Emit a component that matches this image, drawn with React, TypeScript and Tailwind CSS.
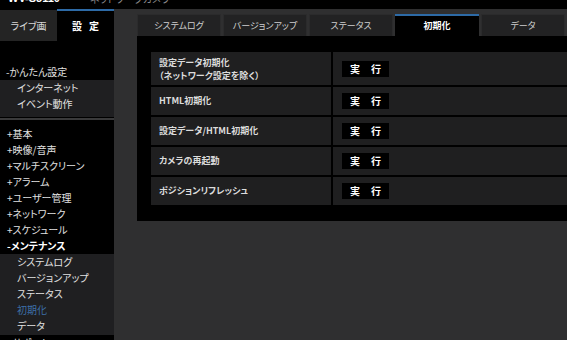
const font = "[font-family:'Noto_Sans_CJK_JP',sans-serif] [font-feature-settings:'palt']";

const basic = ['+基本', '+映像/音声', '+マルチスクリーン', '+アラーム', '+ユーザー管理', '+ネットワーク', '+スケジュール'];
const maint = ['システムログ', 'バージョンアップ', 'ステータス', '初期化', 'データ'];
const tabs = ['システムログ', 'バージョンアップ', 'ステータス', '初期化', 'データ'];

const rows = ['HTML初期化', '設定データ/HTML初期化', 'カメラの再起動', 'ポジションリフレッシュ'];

function RunButton() {
  return (
    <div className="flex h-[16px] w-[47px] items-center justify-center gap-[11px] bg-black text-[10px] font-bold leading-none text-white">
      <span>実</span>
      <span>行</span>
    </div>
  );
}

function Sidebar() {
  return (
    <div className="w-[114px] shrink-0 overflow-hidden bg-black text-[10px] leading-[16px] text-[#e2e2e2]">
      {/* Live / Setup tabs */}
      <div className="flex h-[32px]">
        <div className="flex w-[57px] items-center justify-center border-t border-black bg-[#242424] text-[#d8d8d8]">
          ライブ画
        </div>
        <div className="flex w-[57px] items-center justify-center gap-[7px] border-t-2 border-[#2d6aa6] bg-black font-bold text-white">
          <span>設</span>
          <span>定</span>
        </div>
      </div>

      <div className="h-[23px]" />
      <div className="h-[16px] pl-[6px]">-かんたん設定</div>
      <div className="bg-[#1f1f21] pb-[5px]">
        <div className="h-[16px] pl-[17px]">インターネット</div>
        <div className="h-[16px] pl-[17px]">イベント動作</div>
      </div>
      <div className="h-[1px] bg-black" />
      <div className="h-[2px] bg-[#3a3a3b]" />

      <div className="pt-[6px]">
        {basic.map((item) => (
          <div key={item} className="h-[16px] pl-[7px]">
            {item}
          </div>
        ))}
        <div className="h-[16px] pl-[7px] font-bold text-white">-メンテナンス</div>
      </div>
      <div className="bg-[#1f1f21] pb-[1px]">
        {maint.map((item) => (
          <div
            key={item}
            className={item === '初期化' ? 'h-[16px] pl-[17px] text-[#3d6fa8]' : 'h-[16px] pl-[17px]'}
          >
            {item}
          </div>
        ))}
      </div>
      <div className="h-[16px] pl-[7px]">+サポート</div>
    </div>
  );
}

export default function App() {
  return (
    <div className={`flex h-[340px] w-[567px] flex-col overflow-hidden bg-[#2f2f30] ${font}`}>
      {/* Header, cut at top */}
      <div className="flex h-[9px] shrink-0 items-end gap-[30px] overflow-hidden bg-black pl-[8px] leading-none">
        <span className="mb-[5px] text-[11px] font-bold text-white [font-family:'Liberation_Sans',sans-serif]">WV-S3110</span>
        <span className="mb-[5px] text-[10px] text-[#8a8a8a]">ネットワークカメラ</span>
      </div>

      <div className="flex min-h-0 flex-1">
        <Sidebar />

        <div className="min-w-0 flex-1 overflow-hidden pl-[23px] pt-[5px]">
          {/* Tabs */}
          <div className="flex gap-[2px]">
            {tabs.map((t) => (
              <div
                key={t}
                className={
                  t === '初期化'
                    ? 'flex h-[22px] w-[84px] shrink-0 items-center justify-center border-t-2 border-[#2d6aa6] bg-black text-[9px] font-bold text-white'
                    : 'flex h-[22px] w-[84px] shrink-0 items-center justify-center border-t border-x border-[#2b2b2c] bg-[#222223] text-[9px] text-[#cfcfcf]'
                }
              >
                {t}
              </div>
            ))}
          </div>

          {/* Panel */}
          <div className="w-[470px] bg-black pb-[16px] pl-[14px] pt-[16px]">
            <div className="flex flex-col gap-[2px] text-[9px] font-bold text-[#dcdcdc]">
              <div className="flex h-[33px] gap-[2px]">
                <div className="flex w-[180px] shrink-0 flex-col justify-center bg-[#1f1f20] pl-[8px] leading-[13px]">
                  <span>設定データ初期化</span>
                  <span>（ネットワーク設定を除く）</span>
                </div>
                <div className="flex flex-1 items-center bg-[#1f1f20] pl-[9px]">
                  <RunButton />
                </div>
              </div>
              {rows.map((r) => (
                <div key={r} className="flex h-[28px] gap-[2px]">
                  <div className="flex w-[180px] shrink-0 items-center bg-[#1f1f20] pl-[8px]">{r}</div>
                  <div className="flex flex-1 items-center bg-[#1f1f20] pl-[9px]">
                    <RunButton />
                  </div>
                </div>
              ))}
            </div>
          </div>
        </div>
      </div>
    </div>
  );
}
